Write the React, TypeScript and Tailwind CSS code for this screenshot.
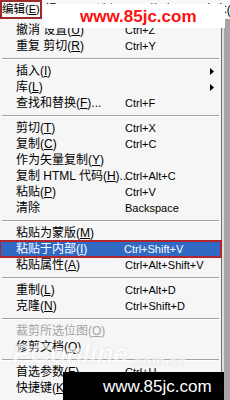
import React from 'react';

type Row =
  | { sep: true }
  | { sep?: false; label: React.ReactNode; keys?: string; arrow?: boolean; active?: boolean; disabled?: boolean };

const u = (c: string) => <span className="underline underline-offset-1">{c}</span>;

const rows: Row[] = [
  { label: <>撤消 设置({u('U')})</>, keys: 'Ctrl+Z' },
  { label: <>重复 剪切({u('R')})</>, keys: 'Ctrl+Y' },
  { sep: true },
  { label: <>插入({u('I')})</>, arrow: true },
  { label: <>库({u('L')})</>, arrow: true },
  { label: <>查找和替换({u('F')})...</>, keys: 'Ctrl+F' },
  { sep: true },
  { label: <>剪切({u('T')})</>, keys: 'Ctrl+X' },
  { label: <>复制({u('C')})</>, keys: 'Ctrl+C' },
  { label: <>作为矢量复制({u('Y')})</> },
  { label: <>复制 HTML 代码({u('H')})...</>, keys: 'Ctrl+Alt+C' },
  { label: <>粘贴({u('P')})</>, keys: 'Ctrl+V' },
  { label: <>清除</>, keys: 'Backspace' },
  { sep: true },
  { label: <>粘贴为蒙版({u('M')})</> },
  { label: <>粘贴于内部({u('I')})</>, keys: 'Ctrl+Shift+V', active: true },
  { label: <>粘贴属性({u('A')})</>, keys: 'Ctrl+Alt+Shift+V' },
  { sep: true },
  { label: <>重制({u('L')})</>, keys: 'Ctrl+Alt+D' },
  { label: <>克隆({u('N')})</>, keys: 'Ctrl+Shift+D' },
  { sep: true },
  { label: <>裁剪所选位图({u('O')})</>, disabled: true },
  { label: <>修剪文档({u('Q')})</> },
  { sep: true },
  { label: <>首选参数({u('F')})</>, keys: 'Ctrl+U' },
  { label: <>快捷键({u('K')})</> },
];

const font = { fontFamily: '"Liberation Sans", "Noto Sans CJK SC", sans-serif' };

export default function App() {
  return (
    <div className="relative w-[230px] h-[400px] overflow-hidden bg-[#f6f6f6] text-black" style={font}>
      {/* menu bar */}
      <div className="flex h-[19px] items-center bg-[#f8f8f8] text-[12px] leading-none whitespace-nowrap">
        <div className="flex h-[19px] w-[50px] items-center border-2 border-[#9c2b2b] text-[11.5px]">
          编辑<span className="text-[11px]">({u('E')})</span>
        </div>
        <span className="ml-[3px]">视图({u('V')})</span>
        <span className="ml-[12px]">选择({u('S')})</span>
        <span className="ml-[12px]">修改({u('M')})</span>
        <span className="ml-[12px]">文本({u('T')})</span>
      </div>

      <div className="flex">
        <div className="w-[222px] border-r border-[#6f6f6f] bg-[#f6f6f6] pt-[3px] pb-[10px]">
          {rows.map((r, i) =>
            r.sep ? (
              <div key={i} className="flex h-[9px] items-center px-[2px]">
                <div className="w-full border-t border-b border-t-[#a3a3a3] border-b-white" />
              </div>
            ) : (
              <div
                key={i}
                className={
                  'flex h-[16px] items-center whitespace-nowrap text-[12px] leading-none ' +
                  (r.active ? 'mx-[-1px] h-[18px] my-[-1px] border-2 border-[#b0262c] bg-[#316ac5] text-white' : '') +
                  (r.disabled ? ' text-[#a4a4a4]' : '')
                }
              >
                <div className={r.active ? 'w-[123px] pl-[15px]' : 'w-[125px] pl-[16px]'}>{r.label}</div>
                <div className="flex-1 text-[11px]">{r.keys}</div>
                {r.arrow && (
                  <svg width="4" height="7" viewBox="0 0 4 7" className="mr-[7px]">
                    <path d="M0 0 L4 3.5 L0 7 Z" fill="#000" />
                  </svg>
                )}
              </div>
            )
          )}
        </div>
        <div className="w-[8px] border-l-2 border-[#dedede] bg-[#a6a6a6]" />
      </div>

      {/* pconline watermark */}
      <div
        className="pointer-events-none absolute left-[12px] top-[340px] flex items-end text-white opacity-60 whitespace-nowrap"
        style={{ fontFamily: '"Liberation Sans", sans-serif', textShadow: '0 0 1px #c4c4c4, 0 0 1px #c4c4c4' }}
      >
        <span className="text-[28px] font-bold italic leading-none tracking-tight">PConline</span>
        <span className="ml-[2px] text-[15px] font-bold leading-none">.com.cn</span>
      </div>

      {/* top watermark */}
      <div className="absolute left-[44px] top-[4px] flex h-[24px] w-[181px] items-center bg-white pl-[36px]">
        <span className="text-[17px] font-bold text-[#ff1010] leading-none" style={{ fontFamily: '"Liberation Sans", sans-serif' }}>
          www.85jc.com
        </span>
      </div>

      {/* bottom watermark */}
      <div className="absolute left-[63px] top-[372px] flex h-[28px] w-[161px] items-center bg-black pl-[40px]">
        <span className="text-[17px] text-white leading-none" style={{ fontFamily: '"Liberation Sans", sans-serif' }}>
          www.85jc.com
        </span>
      </div>
    </div>
  );
}
